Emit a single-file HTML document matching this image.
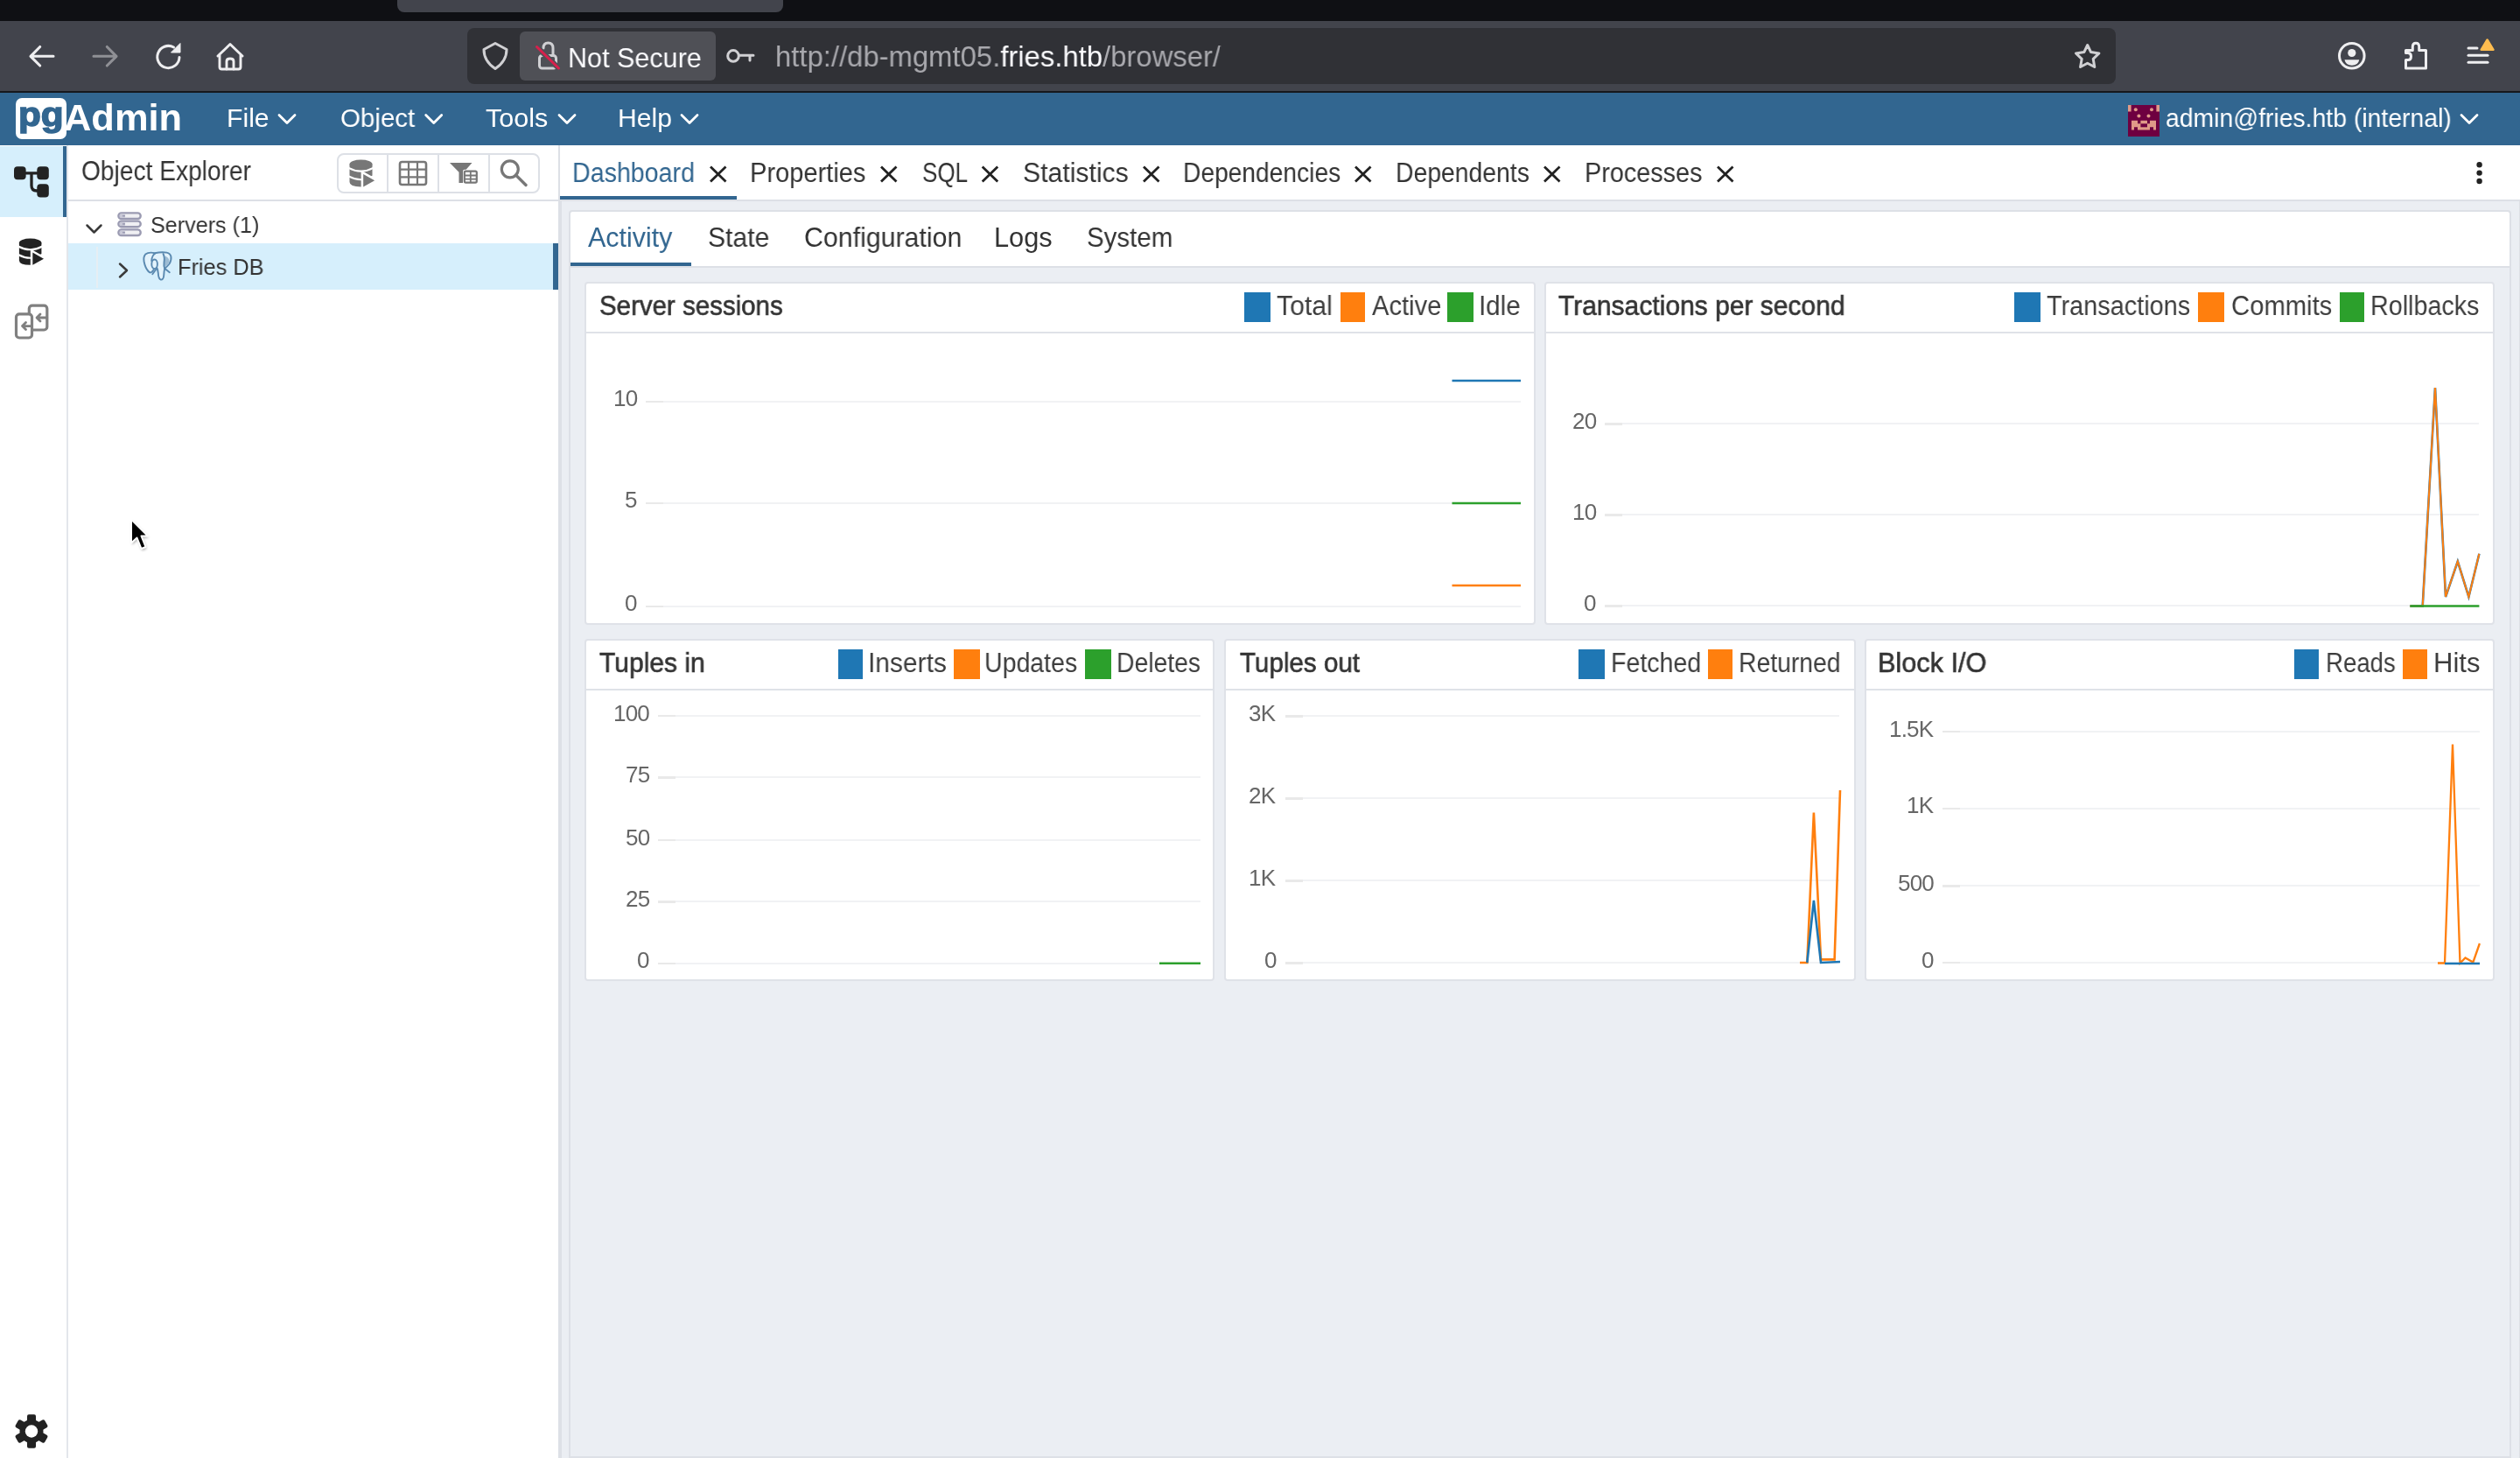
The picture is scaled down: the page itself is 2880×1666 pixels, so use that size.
<!DOCTYPE html>
<html><head><meta charset="utf-8"><title>pgAdmin 4</title>
<style>
html,body{margin:0;padding:0;width:2880px;height:1666px;overflow:hidden;background:#fff}
body{position:relative;font-family:'Liberation Sans', sans-serif}
.t{position:absolute;white-space:pre;font-family:'Liberation Sans', sans-serif;transform-origin:0 0;will-change:transform}
</style></head><body>
<div style="position:absolute;left:0px;top:0px;width:2880px;height:24px;background:#0f1014"></div>
<div style="position:absolute;left:454px;top:0px;width:441px;height:14px;background:#42444c;border-radius:0 0 8px 8px"></div>
<div style="position:absolute;left:0px;top:24px;width:2880px;height:80px;background:#42444c"></div>
<div style="position:absolute;left:0px;top:104px;width:2880px;height:2px;background:#16181d"></div>
<div style="position:absolute;left:534px;top:32px;width:1884px;height:64px;background:#303136;border-radius:8px"></div>
<div style="position:absolute;left:594px;top:36px;width:224px;height:56px;background:#4f5056;border-radius:6px"></div>
<div style="position:absolute;left:0px;top:106px;width:2880px;height:60px;background:#326690"></div>
<div style="position:absolute;left:18px;top:112px;width:58px;height:47px;background:#fff;border-radius:7px"></div>
<div style="position:absolute;left:0px;top:166px;width:76px;height:1500px;background:#fff"></div>
<div style="position:absolute;left:0px;top:167px;width:72px;height:81px;background:#d6effc"></div>
<div style="position:absolute;left:72px;top:167px;width:4px;height:81px;background:#326690"></div>
<div style="position:absolute;left:76px;top:166px;width:2px;height:1500px;background:#e3e6eb"></div>
<div style="position:absolute;left:78px;top:166px;width:560px;height:1500px;background:#fff"></div>
<div style="position:absolute;left:78px;top:228px;width:560px;height:2px;background:#dde0e6"></div>
<div style="position:absolute;left:385px;top:174.5px;width:232px;height:46px;border:2px solid #dde0e6;border-radius:8px;box-sizing:border-box"></div>
<div style="position:absolute;left:442px;top:175px;width:2px;height:45px;background:#dde0e6"></div>
<div style="position:absolute;left:500px;top:175px;width:2px;height:45px;background:#dde0e6"></div>
<div style="position:absolute;left:558px;top:175px;width:2px;height:45px;background:#dde0e6"></div>
<div style="position:absolute;left:78px;top:278px;width:560px;height:53px;background:#d6effc"></div>
<div style="position:absolute;left:632px;top:278px;width:6px;height:53px;background:#326690"></div>
<div style="position:absolute;left:110px;top:282px;width:2px;height:47px;background:#e6eef3"></div>
<div style="position:absolute;left:638px;top:166px;width:2px;height:1500px;background:#dde0e6"></div>
<div style="position:absolute;left:640px;top:166px;width:2240px;height:62px;background:#fff"></div>
<div style="position:absolute;left:640px;top:224px;width:202px;height:4px;background:#326690"></div>
<div style="position:absolute;left:640px;top:228px;width:2240px;height:2px;background:#dde0e6"></div>
<div style="position:absolute;left:640px;top:230px;width:2240px;height:1436px;background:#ebeef3"></div>
<div style="position:absolute;left:640px;top:230px;width:2px;height:1436px;background:#dde0e6"></div>
<div style="position:absolute;left:2879px;top:230px;width:1px;height:1436px;background:#dde0e6"></div>
<div style="position:absolute;left:650px;top:240px;width:2220px;height:1426px;border:2px solid #dde0e6;box-sizing:border-box;border-bottom:0;border-radius:4px 4px 0 0"></div>
<div style="position:absolute;left:652px;top:242px;width:2216px;height:62px;background:#fff;border-radius:3px 3px 0 0"></div>
<div style="position:absolute;left:652px;top:300px;width:138px;height:4px;background:#326690"></div>
<div style="position:absolute;left:652px;top:304px;width:2216px;height:2px;background:#dde0e6"></div>
<div style="position:absolute;left:650px;top:1664px;width:2220px;height:2px;background:#dde0e6"></div>
<div style="position:absolute;left:668px;top:322px;width:1087px;height:392px;background:#fff;border:2px solid #dfe2e8;border-radius:4px;box-sizing:border-box"></div>
<div style="position:absolute;left:668px;top:379px;width:1087px;height:2px;background:#dfe2e8"></div>
<div style="position:absolute;left:1765px;top:322px;width:1086px;height:392px;background:#fff;border:2px solid #dfe2e8;border-radius:4px;box-sizing:border-box"></div>
<div style="position:absolute;left:1765px;top:379px;width:1086px;height:2px;background:#dfe2e8"></div>
<div style="position:absolute;left:668px;top:730px;width:720px;height:391px;background:#fff;border:2px solid #dfe2e8;border-radius:4px;box-sizing:border-box"></div>
<div style="position:absolute;left:668px;top:787px;width:720px;height:2px;background:#dfe2e8"></div>
<div style="position:absolute;left:1399px;top:730px;width:722px;height:391px;background:#fff;border:2px solid #dfe2e8;border-radius:4px;box-sizing:border-box"></div>
<div style="position:absolute;left:1399px;top:787px;width:722px;height:2px;background:#dfe2e8"></div>
<div style="position:absolute;left:2131px;top:730px;width:720px;height:391px;background:#fff;border:2px solid #dfe2e8;border-radius:4px;box-sizing:border-box"></div>
<div style="position:absolute;left:2131px;top:787px;width:720px;height:2px;background:#dfe2e8"></div>
<div style="position:absolute;left:1422px;top:334px;width:30px;height:34px;background:#1f77b4"></div>
<div style="position:absolute;left:1532px;top:334px;width:28px;height:34px;background:#ff7f0e"></div>
<div style="position:absolute;left:1654px;top:334px;width:30px;height:34px;background:#2ca02c"></div>
<div style="position:absolute;left:2302px;top:334px;width:30px;height:34px;background:#1f77b4"></div>
<div style="position:absolute;left:2512px;top:334px;width:30px;height:34px;background:#ff7f0e"></div>
<div style="position:absolute;left:2674px;top:334px;width:28px;height:34px;background:#2ca02c"></div>
<div style="position:absolute;left:958px;top:742px;width:28px;height:34px;background:#1f77b4"></div>
<div style="position:absolute;left:1090px;top:742px;width:30px;height:34px;background:#ff7f0e"></div>
<div style="position:absolute;left:1240px;top:742px;width:30px;height:34px;background:#2ca02c"></div>
<div style="position:absolute;left:1804px;top:742px;width:30px;height:34px;background:#1f77b4"></div>
<div style="position:absolute;left:1952px;top:742px;width:28px;height:34px;background:#ff7f0e"></div>
<div style="position:absolute;left:2622px;top:742px;width:28px;height:34px;background:#1f77b4"></div>
<div style="position:absolute;left:2746px;top:742px;width:28px;height:34px;background:#ff7f0e"></div>
<div style="position:absolute;left:738px;top:457.5px;width:20px;height:2.5px;background:#e9e9e9"></div>
<div style="position:absolute;left:758px;top:457.5px;width:980px;height:2px;background:#f1f2f4"></div>
<div style="position:absolute;left:738px;top:573.5px;width:20px;height:2.5px;background:#e9e9e9"></div>
<div style="position:absolute;left:758px;top:573.5px;width:980px;height:2px;background:#f1f2f4"></div>
<div style="position:absolute;left:738px;top:691.5px;width:20px;height:2.5px;background:#e9e9e9"></div>
<div style="position:absolute;left:758px;top:691.5px;width:980px;height:2px;background:#f1f2f4"></div>
<div style="position:absolute;left:1834px;top:483px;width:20px;height:2.5px;background:#e9e9e9"></div>
<div style="position:absolute;left:1854px;top:483px;width:979.4000000000001px;height:2px;background:#f1f2f4"></div>
<div style="position:absolute;left:1834px;top:587.2px;width:20px;height:2.5px;background:#e9e9e9"></div>
<div style="position:absolute;left:1854px;top:587.2px;width:979.4000000000001px;height:2px;background:#f1f2f4"></div>
<div style="position:absolute;left:1834px;top:691.3px;width:20px;height:2.5px;background:#e9e9e9"></div>
<div style="position:absolute;left:1854px;top:691.3px;width:979.4000000000001px;height:2px;background:#f1f2f4"></div>
<div style="position:absolute;left:752px;top:816.9px;width:20px;height:2.5px;background:#e9e9e9"></div>
<div style="position:absolute;left:772px;top:816.9px;width:600px;height:2px;background:#f1f2f4"></div>
<div style="position:absolute;left:752px;top:887px;width:20px;height:2.5px;background:#e9e9e9"></div>
<div style="position:absolute;left:772px;top:887px;width:600px;height:2px;background:#f1f2f4"></div>
<div style="position:absolute;left:752px;top:958.9px;width:20px;height:2.5px;background:#e9e9e9"></div>
<div style="position:absolute;left:772px;top:958.9px;width:600px;height:2px;background:#f1f2f4"></div>
<div style="position:absolute;left:752px;top:1029.4px;width:20px;height:2.5px;background:#e9e9e9"></div>
<div style="position:absolute;left:772px;top:1029.4px;width:600px;height:2px;background:#f1f2f4"></div>
<div style="position:absolute;left:752px;top:1099.5px;width:20px;height:2.5px;background:#e9e9e9"></div>
<div style="position:absolute;left:772px;top:1099.5px;width:600px;height:2px;background:#f1f2f4"></div>
<div style="position:absolute;left:1468.7px;top:817px;width:20px;height:2.5px;background:#e9e9e9"></div>
<div style="position:absolute;left:1488.7px;top:817px;width:613.6000000000001px;height:2px;background:#f1f2f4"></div>
<div style="position:absolute;left:1468.7px;top:911px;width:20px;height:2.5px;background:#e9e9e9"></div>
<div style="position:absolute;left:1488.7px;top:911px;width:613.6000000000001px;height:2px;background:#f1f2f4"></div>
<div style="position:absolute;left:1468.7px;top:1005px;width:20px;height:2.5px;background:#e9e9e9"></div>
<div style="position:absolute;left:1488.7px;top:1005px;width:613.6000000000001px;height:2px;background:#f1f2f4"></div>
<div style="position:absolute;left:1468.7px;top:1099px;width:20px;height:2.5px;background:#e9e9e9"></div>
<div style="position:absolute;left:1488.7px;top:1099px;width:613.6000000000001px;height:2px;background:#f1f2f4"></div>
<div style="position:absolute;left:2220px;top:834.7px;width:20px;height:2.5px;background:#e9e9e9"></div>
<div style="position:absolute;left:2240px;top:834.7px;width:593.9000000000001px;height:2px;background:#f1f2f4"></div>
<div style="position:absolute;left:2220px;top:922.5px;width:20px;height:2.5px;background:#e9e9e9"></div>
<div style="position:absolute;left:2240px;top:922.5px;width:593.9000000000001px;height:2px;background:#f1f2f4"></div>
<div style="position:absolute;left:2220px;top:1011px;width:20px;height:2.5px;background:#e9e9e9"></div>
<div style="position:absolute;left:2240px;top:1011px;width:593.9000000000001px;height:2px;background:#f1f2f4"></div>
<div style="position:absolute;left:2220px;top:1098.7px;width:20px;height:2.5px;background:#e9e9e9"></div>
<div style="position:absolute;left:2240px;top:1098.7px;width:593.9000000000001px;height:2px;background:#f1f2f4"></div>
<svg style="position:absolute;left:0;top:0" width="2880" height="1666" viewBox="0 0 2880 1666"><polyline points="1659.5,435 1738,435" fill="none" stroke="#1f77b4" stroke-width="2.6" stroke-linejoin="miter" stroke-linecap="butt"/><polyline points="1659.5,575 1738,575" fill="none" stroke="#2ca02c" stroke-width="2.6" stroke-linejoin="miter" stroke-linecap="butt"/><polyline points="1659.5,669 1738,669" fill="none" stroke="#ff7f0e" stroke-width="2.6" stroke-linejoin="miter" stroke-linecap="butt"/><polyline points="2754.4,692.5 2768.7,692.5 2783,443 2795,682 2808.8,641.5 2821.4,682 2833.4,632.7" fill="none" stroke="#1f77b4" stroke-width="2.6" stroke-linejoin="miter" stroke-linecap="butt"/><polyline points="2754.4,692.5 2768.7,692.5 2783,443 2795,682 2808.8,641.5 2821.4,682 2833.4,632.7" fill="none" stroke="#ff7f0e" stroke-width="2.0" stroke-linejoin="miter" stroke-linecap="butt"/><polyline points="2754.4,692.5 2833.4,692.5" fill="none" stroke="#2ca02c" stroke-width="2.6" stroke-linejoin="miter" stroke-linecap="butt"/><polyline points="1325,1100.7 1372,1100.7" fill="none" stroke="#2ca02c" stroke-width="2.6" stroke-linejoin="miter" stroke-linecap="butt"/><polyline points="2057,1100 2065.3,1100 2072.9,928.5 2081,1096.4 2096.6,1096.4 2103,903" fill="none" stroke="#ff7f0e" stroke-width="2.6" stroke-linejoin="miter" stroke-linecap="butt"/><polyline points="2065.3,1100 2072.9,1029 2081,1100 2103,1099" fill="none" stroke="#1f77b4" stroke-width="2.6" stroke-linejoin="miter" stroke-linecap="butt"/><polyline points="2786,1100.5 2794,1100.5 2803,850.6 2811.5,1100.5 2817.5,1094.5 2826.4,1099.5 2833.9,1078" fill="none" stroke="#ff7f0e" stroke-width="2.3" stroke-linejoin="miter" stroke-linecap="butt"/><polyline points="2794,1101 2834,1101" fill="none" stroke="#1f77b4" stroke-width="2.3" stroke-linejoin="miter" stroke-linecap="butt"/></svg>
<svg style="position:absolute;left:0;top:0;pointer-events:none" width="2880" height="1666" viewBox="0 0 2880 1666">
<g fill="none" stroke="#eeeef0" stroke-width="3.1" stroke-linecap="round" stroke-linejoin="round">
<path d="M61 64.3H35.5M45.7 53.5L35 64.3L45.7 75"/>
</g>
<g fill="none" stroke="#8f9095" stroke-width="3.1" stroke-linecap="round" stroke-linejoin="round">
<path d="M107 64.3H132.5M122.3 53.5L133 64.3L122.3 75"/>
</g>
<g fill="none" stroke="#eeeef0" stroke-width="3" stroke-linecap="round">
<path d="M205 65.5A12.6 12.6 0 1 1 198.5 54"/>
</g>
<path d="M195.5 60L206 60L206 49.5Z" fill="#eeeef0" stroke="#eeeef0" stroke-width="1" stroke-linejoin="round"/>
<g fill="none" stroke="#eeeef0" stroke-width="2.9" stroke-linecap="round" stroke-linejoin="round">
<path d="M249 64L263 50.5L277 64M251 62V76.5Q251 79 253.5 79H272.5Q275 79 275 76.5V62"/>
<path d="M259 79V70Q259 67 263 67Q267 67 267 70V79"/>
</g>
<path d="M566 49.5L553 56.5Q553 70 566 78.5Q579 70 579 56.5Z" fill="none" stroke="#d0d0d3" stroke-width="3" stroke-linejoin="round"/>
<g fill="none" stroke="#d0d0d3" stroke-width="3" stroke-linecap="round" stroke-linejoin="round">
<rect x="616.5" y="63.5" width="19" height="14.5" rx="3"/>
<path d="M621 55Q621 49 626.5 49Q632 49 632 55V63"/>
</g>
<path d="M613.5 53.5L638.5 78" stroke="#4f5056" stroke-width="6"/>
<path d="M613.5 53.5L638.5 78" stroke="#d8204c" stroke-width="3" stroke-linecap="round"/>
<g fill="none" stroke="#d0d0d3" stroke-width="3" stroke-linecap="round">
<circle cx="838" cy="63.9" r="6.3"/><path d="M844.5 63.2H861M857 63.2V69"/>
</g>
<path d="M2385.7 51.5L2389.6 59.6L2398.9 60.9L2392.2 67.3L2393.8 76.5L2385.7 72.2L2377.6 76.5L2379.2 67.3L2372.5 60.9L2381.8 59.6Z" fill="none" stroke="#d0d0d3" stroke-width="3" stroke-linejoin="round"/>
<circle cx="2687.8" cy="63.8" r="14.3" fill="none" stroke="#eeeef0" stroke-width="3"/>
<circle cx="2687.8" cy="60.5" r="4.6" fill="#eeeef0"/>
<path d="M2679.5 68.3H2696.3Q2695 74.8 2687.9 74.8Q2680.8 74.8 2679.5 68.3Z" fill="#eeeef0"/>
<path d="M2749.5 57.5H2757.3V53.5Q2757.3 49.3 2761 49.3Q2764.7 49.3 2764.7 53.5V57.5H2772.5V78H2749.5V68.5H2752Q2755.5 68.5 2755.5 64.5Q2755.5 60.5 2752 60.5H2749.5Z" fill="none" stroke="#eeeef0" stroke-width="3" stroke-linejoin="round"/>
<g stroke="#eeeef0" stroke-width="3" stroke-linecap="round"><path d="M2821 55.1H2831"/><path d="M2821 63.2H2843"/><path d="M2821 71.2H2843"/></g>
<path d="M2842.6 45.5L2849.5 56.8H2835.7Z" fill="#ffbd4f" stroke="#ffbd4f" stroke-width="2.5" stroke-linejoin="round"/>
<g fill="none" stroke="#fff" stroke-width="2.8" stroke-linecap="round" stroke-linejoin="round">
<path d="M319 131.5L328 140.5L337 131.5"/>
<path d="M486.7 131.5L495.7 140.5L504.7 131.5"/>
<path d="M639 131.5L648 140.5L657 131.5"/>
<path d="M779 131.5L788 140.5L797 131.5"/>
<path d="M2813 131.5L2822 140.5L2831 131.5"/>
</g>
<rect x="2432" y="120" width="36" height="36" fill="#6e0040"/>
<g fill="#e09a88">
<rect x="2432" y="120" width="3.6" height="7.5"/><rect x="2464.4" y="120" width="3.6" height="7.5"/>
<circle cx="2440.8" cy="125.2" r="2"/>
<circle cx="2459" cy="125.2" r="2"/>
<circle cx="2444.4" cy="132.4" r="2"/>
<circle cx="2455.5" cy="132.4" r="2"/>
<path d="M2436 137.7H2443V141.3H2446.4V137.7H2454V141.3H2457V137.7H2464V148.6H2461V145.3H2457V148.6H2443V145.3H2439V148.6H2436Z"/>
</g>
<rect x="2446.4" y="141.3" width="7.6" height="4" fill="#6e0040"/>
<g fill="#222">
<rect x="16" y="190.2" width="13.6" height="15.1" rx="4"/>
<rect x="42.3" y="190.2" width="13.5" height="15.1" rx="4"/>
<rect x="42.3" y="210.3" width="13.5" height="15.3" rx="4"/>
</g>
<path d="M29 197.8H43M36 197.8V212Q36 218 42 218H43" fill="none" stroke="#222" stroke-width="3.3"/>
<g transform="translate(21.9 272.5) scale(1.0)"><path d="M0 5V25Q0 30.3 12.75 30.3Q25.5 30.3 25.5 25V5Z" fill="#222"/><ellipse cx="12.75" cy="5" rx="12.75" ry="5" fill="#222"/><path d="M-1 9Q12.75 16.5 26.5 9" fill="none" stroke="#fff" stroke-width="2"/><path d="M-1 18.5Q12.75 26 26.5 18.5" fill="none" stroke="#fff" stroke-width="2"/><path d="M15.4 16.1L28.1 23.2L15.4 30.3Z" fill="#222" stroke="#fff" stroke-width="5" stroke-linejoin="miter"/><path d="M15.4 16.1L28.1 23.2L15.4 30.3Z" fill="#222"/></g>
<g fill="none" stroke="#808080" stroke-width="3.2" stroke-linecap="round" stroke-linejoin="round">
<rect x="33.3" y="349.2" width="20.5" height="27.8" rx="3.5"/>
</g>
<rect x="18.5" y="358.8" width="18" height="27.2" rx="3.5" fill="#fff" stroke="#808080" stroke-width="3.2"/>
<g fill="none" stroke="#808080" stroke-width="2.8" stroke-linecap="round" stroke-linejoin="round">
<path d="M36.5 372.6H25.5M29.5 368.6L25.5 372.6L29.5 376.6"/>
<path d="M53.8 363H42.2M46 359L42 363L46 367"/>
</g>
<g fill="#222">
<circle cx="36" cy="1635.5" r="13.5"/>
<rect x="31" y="1616.2" width="10" height="9" rx="2" transform="rotate(0 36 1635.5)"/>
<rect x="31" y="1616.2" width="10" height="9" rx="2" transform="rotate(60 36 1635.5)"/>
<rect x="31" y="1616.2" width="10" height="9" rx="2" transform="rotate(120 36 1635.5)"/>
<rect x="31" y="1616.2" width="10" height="9" rx="2" transform="rotate(180 36 1635.5)"/>
<rect x="31" y="1616.2" width="10" height="9" rx="2" transform="rotate(240 36 1635.5)"/>
<rect x="31" y="1616.2" width="10" height="9" rx="2" transform="rotate(300 36 1635.5)"/>
</g>
<circle cx="36" cy="1635.5" r="7.2" fill="#fff"/>
<g transform="translate(399.5 182.6) scale(1.02)"><path d="M0 5V25Q0 30.3 12.75 30.3Q25.5 30.3 25.5 25V5Z" fill="#777"/><ellipse cx="12.75" cy="5" rx="12.75" ry="5" fill="#777"/><path d="M-1 9Q12.75 16.5 26.5 9" fill="none" stroke="#fff" stroke-width="2"/><path d="M-1 18.5Q12.75 26 26.5 18.5" fill="none" stroke="#fff" stroke-width="2"/><path d="M15.4 16.1L28.1 23.2L15.4 30.3Z" fill="#777" stroke="#fff" stroke-width="5" stroke-linejoin="miter"/><path d="M15.4 16.1L28.1 23.2L15.4 30.3Z" fill="#777"/></g>
<rect x="457" y="185" width="30" height="26" rx="2.5" fill="none" stroke="#777" stroke-width="2.6"/>
<g stroke="#777" stroke-width="2.2"><path d="M457 193.7H487M457 202.3H487M467 185V211M477 185V211"/></g>
<path d="M514 186H539.5L530 196.8V209H524.5V196.8Z" fill="#777"/>
<rect x="529" y="193.8" width="17.5" height="16.4" rx="2" fill="#fff"/>
<rect x="530.8" y="195.6" width="14" height="13" rx="1.5" fill="none" stroke="#777" stroke-width="2.2"/>
<g stroke="#777" stroke-width="1.8"><path d="M530.8 200.5H544.8M530.8 204.7H544.8M537.8 195.6V208.6"/></g>
<circle cx="582.8" cy="193.3" r="9.5" fill="none" stroke="#777" stroke-width="3.2"/>
<path d="M589.5 200L601 211.5" stroke="#777" stroke-width="3.4" stroke-linecap="round"/>
<g fill="none" stroke="#3a3a3a" stroke-width="2.5" stroke-linecap="round" stroke-linejoin="round">
<path d="M99.5 257.5L107.5 265.5L115.5 257.5"/>
<path d="M137 301.5L145 309L137 316.5"/>
</g>
<rect x="135.4" y="243.39999999999998" width="25.3" height="6.6" rx="3.3" fill="#f0f0f3" stroke="#9b9bb2" stroke-width="2.4"/>
<rect x="136.8" y="244.6" width="6" height="4.2" fill="#c8c8d6"/>
<path d="M140 246.7H143" stroke="#9b9bb2" stroke-width="1.6"/>
<rect x="135.4" y="252.6" width="25.3" height="6.6" rx="3.3" fill="#f0f0f3" stroke="#9b9bb2" stroke-width="2.4"/>
<rect x="136.8" y="253.8" width="6" height="4.2" fill="#c8c8d6"/>
<path d="M140 255.9H143" stroke="#9b9bb2" stroke-width="1.6"/>
<rect x="135.4" y="262.4" width="25.3" height="6.6" rx="3.3" fill="#f0f0f3" stroke="#9b9bb2" stroke-width="2.4"/>
<rect x="136.8" y="263.59999999999997" width="6" height="4.2" fill="#c8c8d6"/>
<path d="M140 265.7H143" stroke="#9b9bb2" stroke-width="1.6"/>
<g stroke="#5a89b0" stroke-width="1.9" stroke-linejoin="round" stroke-linecap="round">
<path d="M177 289.2Q170 287.6 166.2 290.6Q163.6 293.5 164.6 299Q166 306 169.5 310Q171.5 312.3 173.6 310.8Q175.5 309 176.5 306.5L178.5 304Q180.5 308 180.8 312Q181 318.5 183.8 319.6Q186.8 319.8 187.2 315Q187.5 309.5 188.2 306.8Q191 304.6 193.5 301.5Q196.2 297.5 195.4 293Q194.5 289.5 190.5 288.6Q184 287.8 177 289.2Z" fill="#e3f3fc"/>
<path d="M188.5 292.5Q193 294 193.5 298Q193 302 188.5 304.5Q186.5 300 188.5 292.5Z" fill="#9dbcd4" stroke="none"/>
<path d="M177.5 289.5Q173.5 292 173.2 298M186.5 290Q188.5 294 187.5 300Q187 304 188.2 306.8" fill="none"/>
<ellipse cx="176.6" cy="301.8" rx="3.3" ry="5.3" fill="#e3f3fc"/>
<path d="M178.5 307.5L174.3 313.2M188.5 307L193.8 311.2" fill="none"/>
</g>
<g stroke="#222" stroke-width="2.8" stroke-linecap="butt">
<path d="M812 190.5L829.5 207.5M829.5 190.5L812 207.5"/>
<path d="M1007 190.5L1024.5 207.5M1024.5 190.5L1007 207.5"/>
<path d="M1122.7 190.5L1140.2 207.5M1140.2 190.5L1122.7 207.5"/>
<path d="M1307 190.5L1324.5 207.5M1324.5 190.5L1307 207.5"/>
<path d="M1549 190.5L1566.5 207.5M1566.5 190.5L1549 207.5"/>
<path d="M1765 190.5L1782.5 207.5M1782.5 190.5L1765 207.5"/>
<path d="M1963 190.5L1980.5 207.5M1980.5 190.5L1963 207.5"/>
</g>
<g fill="#222">
<circle cx="2833.6" cy="188.2" r="3.2"/>
<circle cx="2833.6" cy="197.6" r="3.2"/>
<circle cx="2833.6" cy="207" r="3.2"/>
</g>
<defs><filter id="cs" x="-50%" y="-50%" width="200%" height="200%"><feGaussianBlur stdDeviation="1.6"/></filter></defs>
<path d="M151 595.5V622.5L157.5 616.5L162.5 629L167.5 627L162.5 614.5H170Z" fill="#000" opacity="0.35" filter="url(#cs)"/>
<path d="M150 593.5V620.5L156.5 614.5L161.5 627L166.5 625L161.5 612.5H169Z" fill="#000" stroke="#fff" stroke-width="2" stroke-linejoin="round"/>
</svg>
<div class="t" style="left:648.6px;top:49.5px;font-size:32px;line-height:32px;letter-spacing:0.00px;transform:scaleX(0.9541);color:#fbfbfe;font-weight:normal;">Not Secure</div>
<div class="t" style="left:885.7px;top:48.4px;font-size:33px;line-height:33px;letter-spacing:0.00px;transform:scaleX(0.9947);color:#a9a9ae;font-weight:normal;">http://db-mgmt05.<span style="color:#fbfbfe">fries.htb</span>/browser/</div>
<div class="t" style="left:258.6px;top:120.2px;font-size:30px;line-height:30px;letter-spacing:0.00px;transform:scaleX(1.0067);color:#ffffff;font-weight:normal;">File</div>
<div class="t" style="left:389.0px;top:120.2px;font-size:30px;line-height:30px;letter-spacing:0.00px;transform:scaleX(0.9835);color:#ffffff;font-weight:normal;">Object</div>
<div class="t" style="left:555.4px;top:120.2px;font-size:30px;line-height:30px;letter-spacing:0.00px;transform:scaleX(1.0190);color:#ffffff;font-weight:normal;">Tools</div>
<div class="t" style="left:706.2px;top:120.2px;font-size:30px;line-height:30px;letter-spacing:0.00px;transform:scaleX(1.0035);color:#ffffff;font-weight:normal;">Help</div>
<div class="t" style="left:2474.9px;top:120.2px;font-size:30px;line-height:30px;letter-spacing:0.00px;transform:scaleX(0.9457);color:#ffffff;font-weight:normal;">admin@fries.htb (internal)</div>
<div class="t" style="left:73.2px;top:113.8px;font-size:42px;line-height:42px;letter-spacing:0.00px;transform:scaleX(1.0344);color:#ffffff;font-weight:bold;">Admin</div>
<div class="t" style="left:21.0px;top:112.0px;font-size:38px;line-height:38px;letter-spacing:0.00px;transform:scaleX(1.1135);color:#326690;font-weight:bold;-webkit-text-stroke:1.4px #326690">pg</div>
<div class="t" style="left:93.1px;top:180.2px;font-size:31px;line-height:31px;letter-spacing:0.00px;transform:scaleX(0.9081);color:#333;font-weight:normal;">Object Explorer</div>
<div class="t" style="left:171.6px;top:243.9px;font-size:26px;line-height:26px;letter-spacing:0.00px;transform:scaleX(0.9667);color:#333;font-weight:normal;">Servers (1)</div>
<div class="t" style="left:203.2px;top:291.7px;font-size:26px;line-height:26px;letter-spacing:0.00px;transform:scaleX(0.9748);color:#333;font-weight:normal;">Fries DB</div>
<div class="t" style="left:654.4px;top:182.0px;font-size:31px;line-height:31px;letter-spacing:0.00px;transform:scaleX(0.9229);color:#326690;font-weight:normal;">Dashboard</div>
<div class="t" style="left:856.7px;top:182.0px;font-size:31px;line-height:31px;letter-spacing:0.00px;transform:scaleX(0.9372);color:#333;font-weight:normal;">Properties</div>
<div class="t" style="left:1053.7px;top:182.0px;font-size:31px;line-height:31px;letter-spacing:0.00px;transform:scaleX(0.8401);color:#333;font-weight:normal;">SQL</div>
<div class="t" style="left:1168.5px;top:182.0px;font-size:31px;line-height:31px;letter-spacing:0.00px;transform:scaleX(0.9735);color:#333;font-weight:normal;">Statistics</div>
<div class="t" style="left:1351.7px;top:182.0px;font-size:31px;line-height:31px;letter-spacing:0.00px;transform:scaleX(0.9092);color:#333;font-weight:normal;">Dependencies</div>
<div class="t" style="left:1594.7px;top:182.0px;font-size:31px;line-height:31px;letter-spacing:0.00px;transform:scaleX(0.9146);color:#333;font-weight:normal;">Dependents</div>
<div class="t" style="left:1810.7px;top:182.0px;font-size:31px;line-height:31px;letter-spacing:0.00px;transform:scaleX(0.9287);color:#333;font-weight:normal;">Processes</div>
<div class="t" style="left:672.4px;top:256.1px;font-size:30.5px;line-height:30.5px;letter-spacing:0.00px;transform:scaleX(0.9981);color:#326690;font-weight:normal;">Activity</div>
<div class="t" style="left:809.0px;top:256.1px;font-size:30.5px;line-height:30.5px;letter-spacing:0.00px;transform:scaleX(0.9880);color:#333;font-weight:normal;">State</div>
<div class="t" style="left:918.5px;top:256.1px;font-size:30.5px;line-height:30.5px;letter-spacing:0.00px;transform:scaleX(0.9937);color:#333;font-weight:normal;">Configuration</div>
<div class="t" style="left:1135.5px;top:256.1px;font-size:30.5px;line-height:30.5px;letter-spacing:0.00px;transform:scaleX(1.0076);color:#333;font-weight:normal;">Logs</div>
<div class="t" style="left:1241.5px;top:256.1px;font-size:30.5px;line-height:30.5px;letter-spacing:0.00px;transform:scaleX(0.9673);color:#333;font-weight:normal;">System</div>
<div class="t" style="left:685.3px;top:332.8px;font-size:32px;line-height:32px;letter-spacing:0.00px;transform:scaleX(0.9211);color:#333;font-weight:normal;-webkit-text-stroke:0.6px #333">Server sessions</div>
<div class="t" style="left:1781.4px;top:332.8px;font-size:32px;line-height:32px;letter-spacing:0.00px;transform:scaleX(0.9378);color:#333;font-weight:normal;-webkit-text-stroke:0.6px #333">Transactions per second</div>
<div class="t" style="left:685.4px;top:740.8px;font-size:32px;line-height:32px;letter-spacing:0.00px;transform:scaleX(0.9391);color:#333;font-weight:normal;-webkit-text-stroke:0.6px #333">Tuples in</div>
<div class="t" style="left:1417.0px;top:740.8px;font-size:32px;line-height:32px;letter-spacing:0.00px;transform:scaleX(0.9246);color:#333;font-weight:normal;-webkit-text-stroke:0.6px #333">Tuples out</div>
<div class="t" style="left:2145.7px;top:740.8px;font-size:32px;line-height:32px;letter-spacing:0.00px;transform:scaleX(0.9574);color:#333;font-weight:normal;-webkit-text-stroke:0.6px #333">Block I/O</div>
<div class="t" style="left:1459.4px;top:333.6px;font-size:31px;line-height:31px;letter-spacing:0.00px;transform:scaleX(0.9757);color:#3d3d3d;font-weight:normal;">Total</div>
<div class="t" style="left:1568.0px;top:333.6px;font-size:31px;line-height:31px;letter-spacing:0.00px;transform:scaleX(0.9389);color:#3d3d3d;font-weight:normal;">Active</div>
<div class="t" style="left:1690.3px;top:333.6px;font-size:31px;line-height:31px;letter-spacing:0.00px;transform:scaleX(0.9547);color:#3d3d3d;font-weight:normal;">Idle</div>
<div class="t" style="left:2339.4px;top:333.6px;font-size:31px;line-height:31px;letter-spacing:0.00px;transform:scaleX(0.9316);color:#3d3d3d;font-weight:normal;">Transactions</div>
<div class="t" style="left:2549.5px;top:333.6px;font-size:31px;line-height:31px;letter-spacing:0.00px;transform:scaleX(0.9427);color:#3d3d3d;font-weight:normal;">Commits</div>
<div class="t" style="left:2709.1px;top:333.6px;font-size:31px;line-height:31px;letter-spacing:0.00px;transform:scaleX(0.9249);color:#3d3d3d;font-weight:normal;">Rollbacks</div>
<div class="t" style="left:992.3px;top:741.6px;font-size:31px;line-height:31px;letter-spacing:0.00px;transform:scaleX(0.9666);color:#3d3d3d;font-weight:normal;">Inserts</div>
<div class="t" style="left:1125.3px;top:741.6px;font-size:31px;line-height:31px;letter-spacing:0.00px;transform:scaleX(0.9195);color:#3d3d3d;font-weight:normal;">Updates</div>
<div class="t" style="left:1276.4px;top:741.6px;font-size:31px;line-height:31px;letter-spacing:0.00px;transform:scaleX(0.9145);color:#3d3d3d;font-weight:normal;">Deletes</div>
<div class="t" style="left:1840.6px;top:741.6px;font-size:31px;line-height:31px;letter-spacing:0.00px;transform:scaleX(0.9213);color:#3d3d3d;font-weight:normal;">Fetched</div>
<div class="t" style="left:1987.2px;top:741.6px;font-size:31px;line-height:31px;letter-spacing:0.00px;transform:scaleX(0.9141);color:#3d3d3d;font-weight:normal;">Returned</div>
<div class="t" style="left:2657.8px;top:741.6px;font-size:31px;line-height:31px;letter-spacing:0.00px;transform:scaleX(0.8909);color:#3d3d3d;font-weight:normal;">Reads</div>
<div class="t" style="left:2781.0px;top:741.6px;font-size:31px;line-height:31px;letter-spacing:0.00px;transform:scaleX(0.9998);color:#3d3d3d;font-weight:normal;">Hits</div>
<div class="t" style="left:700.5px;top:442.4px;font-size:26px;line-height:26px;letter-spacing:-0.8px;color:#666">10</div>
<div class="t" style="left:714.2px;top:558.4px;font-size:26px;line-height:26px;letter-spacing:-0.8px;color:#666">5</div>
<div class="t" style="left:714.0px;top:676.4px;font-size:26px;line-height:26px;letter-spacing:-0.8px;color:#666">0</div>
<div class="t" style="left:1796.7px;top:467.9px;font-size:26px;line-height:26px;letter-spacing:-0.8px;color:#666">20</div>
<div class="t" style="left:1796.7px;top:572.1px;font-size:26px;line-height:26px;letter-spacing:-0.8px;color:#666">10</div>
<div class="t" style="left:1810.2px;top:676.2px;font-size:26px;line-height:26px;letter-spacing:-0.8px;color:#666">0</div>
<div class="t" style="left:700.7px;top:801.8px;font-size:26px;line-height:26px;letter-spacing:-0.8px;color:#666">100</div>
<div class="t" style="left:714.5px;top:871.9px;font-size:26px;line-height:26px;letter-spacing:-0.8px;color:#666">75</div>
<div class="t" style="left:714.5px;top:943.8px;font-size:26px;line-height:26px;letter-spacing:-0.8px;color:#666">50</div>
<div class="t" style="left:714.5px;top:1014.3px;font-size:26px;line-height:26px;letter-spacing:-0.8px;color:#666">25</div>
<div class="t" style="left:728.0px;top:1084.4px;font-size:26px;line-height:26px;letter-spacing:-0.8px;color:#666">0</div>
<div class="t" style="left:1427.3px;top:801.9px;font-size:26px;line-height:26px;letter-spacing:-0.8px;color:#666">3K</div>
<div class="t" style="left:1427.3px;top:895.9px;font-size:26px;line-height:26px;letter-spacing:-0.8px;color:#666">2K</div>
<div class="t" style="left:1427.3px;top:989.9px;font-size:26px;line-height:26px;letter-spacing:-0.8px;color:#666">1K</div>
<div class="t" style="left:1444.5px;top:1083.9px;font-size:26px;line-height:26px;letter-spacing:-0.8px;color:#666">0</div>
<div class="t" style="left:2159.2px;top:819.6px;font-size:26px;line-height:26px;letter-spacing:-0.8px;color:#666">1.5K</div>
<div class="t" style="left:2179.1px;top:907.4px;font-size:26px;line-height:26px;letter-spacing:-0.8px;color:#666">1K</div>
<div class="t" style="left:2169.0px;top:995.9px;font-size:26px;line-height:26px;letter-spacing:-0.8px;color:#666">500</div>
<div class="t" style="left:2196.3px;top:1083.6px;font-size:26px;line-height:26px;letter-spacing:-0.8px;color:#666">0</div>
</body></html>
